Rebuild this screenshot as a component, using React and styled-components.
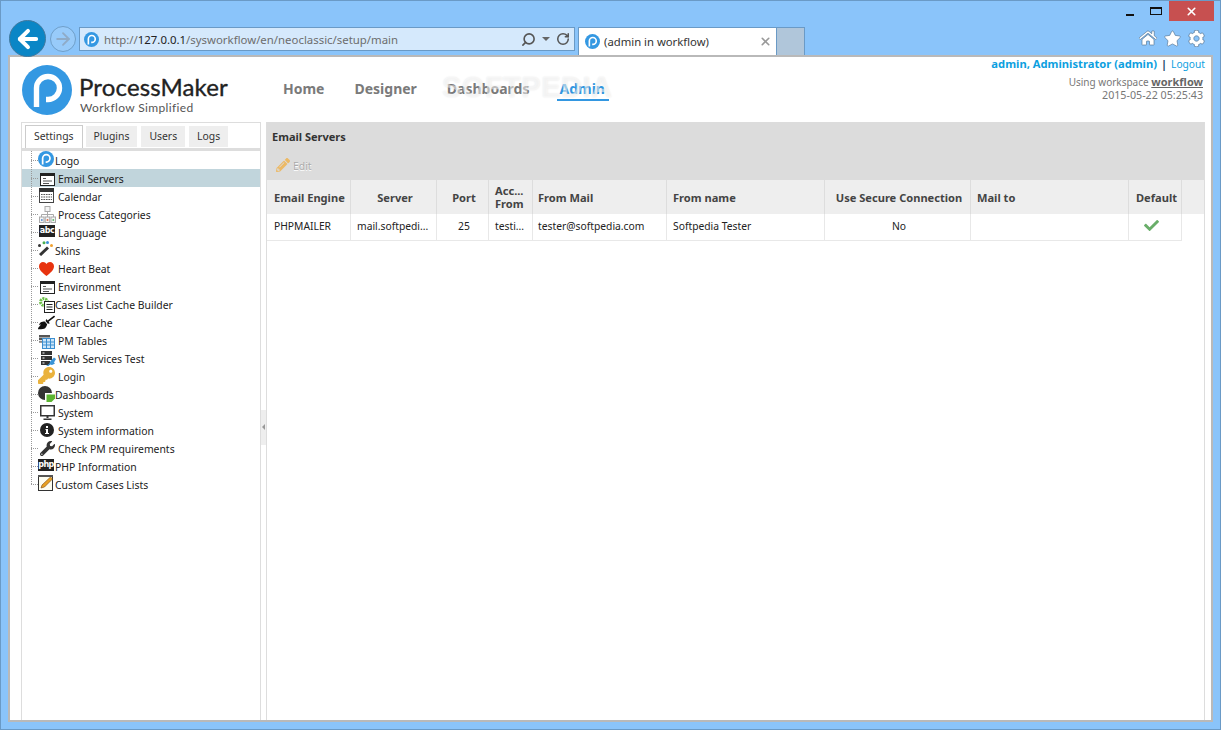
import React from "react";
import styled, { createGlobalStyle } from "styled-components";
import { Search, RotateCw, X, ArrowLeft, ArrowRight } from "lucide-react";
import { FaCog, FaHome, FaStar, FaBroom, FaKey, FaWrench, FaCheck, FaPencilAlt } from "react-icons/fa";

const UI_FONT = `"Noto Sans", "Open Sans", sans-serif`;
const COLUMNS = "84px 86px 52px 44px 134px 158px 146px 158px 53px";

const GlobalStyle = createGlobalStyle`
  html, body { margin: 0; padding: 0; background: #8ac4fa; }
  * { box-sizing: border-box; }
`;

function PMark({ size }) {
  return (
    <svg width={size} height={size} viewBox="0 0 50 50">
      <circle cx="25" cy="25" r="25" fill="#3498e2" />
      <path d="M14.500 42V23A11.500 11.500 0 1 1 26 34.500H24" fill="none" stroke="#fff" strokeWidth="5.400" />
    </svg>
  );
}

const FormIcon = () => (
  <svg width="15" height="13" viewBox="0 0 15 13">
    <rect x=".5" y=".5" width="14" height="12" fill="#fff" stroke="#222" />
    <rect x="1" y="1" width="13" height="2" fill="#222" />
    <path d="M3 5.500h3M3 8h9M3 10.500h6" stroke="#555" fill="none" />
  </svg>
);
const CalendarIcon = () => (
  <svg width="15" height="15" viewBox="0 0 15 15">
    <rect x=".5" y="1" width="14" height="13.500" fill="#fff" stroke="#444" />
    <rect x="0" y="0" width="15" height="4" fill="#333" />
    <path d="M2 6h11v1H2zM2 8.500h11v1H2zM2 11h11v1H2z" fill="#555" />
    <path d="M4 5.500v7M6.500 5.500v7M9 5.500v7M11.500 5.500v7" stroke="#fff" strokeWidth=".8" />
  </svg>
);
const CategoriesIcon = () => (
  <svg width="17" height="17" viewBox="0 0 17 17">
    <rect x="6" y=".5" width="5" height="5" fill="#f4f4f4" stroke="#aaa" />
    <path d="M8.500 5.500V8M2.500 11V8.500h12V11M8.500 8v3" fill="none" stroke="#aaa" />
    <rect x=".5" y="11" width="4.500" height="5.500" fill="#f4f4f4" stroke="#aaa" />
    <rect x="6.200" y="11" width="4.500" height="5.500" fill="#f4f4f4" stroke="#aaa" />
    <rect x="12" y="11" width="4.500" height="5.500" fill="#f4f4f4" stroke="#aaa" />
    <rect x="2" y="13" width="1.600" height="2" fill="#6d9ed8" />
    <rect x="7.700" y="13" width="1.600" height="2" fill="#e07a5a" />
    <rect x="13.500" y="13" width="1.600" height="2" fill="#6dbf7a" />
  </svg>
);
const SkinsIcon = () => (
  <svg width="15" height="15" viewBox="0 0 15 15">
    <path d="M2 14L10 6.500" stroke="#333" strokeWidth="3" />
    <circle cx="6" cy="1.800" r="1.500" fill="#4caf50" />
    <circle cx="9.500" cy="1.500" r="1.500" fill="#3a8fd8" />
    <circle cx="13.500" cy="4.500" r="1.500" fill="#f0a030" />
    <circle cx="1.500" cy="4.500" r="1.500" fill="#333" />
  </svg>
);
const HeartIcon = () => (
  <svg width="15" height="14" viewBox="0 0 15 14">
    <path d="M7.500 14C3 10.500 0 8 0 4.300 0 1.700 2 0 4 0c1.500 0 2.800.8 3.500 2C8.200.8 9.500 0 11 0c2 0 4 1.700 4 4.300C15 8 12 10.500 7.500 14z" fill="#e8330f" />
  </svg>
);
const CacheIcon = () => (
  <svg width="17" height="16" viewBox="0 0 17 16">
    <circle cx="5" cy="5" r="3.400" fill="none" stroke="#6cc04a" strokeWidth="3" strokeDasharray="2 .8" />
    <rect x="5.500" y="4.500" width="10" height="11" fill="#fff" stroke="#222" />
    <path d="M7.500 7.500h6M7.500 10h6M7.500 12.500h6" stroke="#222" />
  </svg>
);
const TablesIcon = () => (
  <svg width="16" height="14" viewBox="0 0 16 14">
    <rect x="3.500" y="3.500" width="12" height="10" fill="#cfe6f8" stroke="#3c8fd0" />
    <path d="M3.500 7h12M3.500 10h12M7.500 3.500v10M11.500 3.500v10" stroke="#3c8fd0" />
    <rect x="0" y="0" width="11" height="2.500" fill="#555" />
    <rect x="0" y="3" width="3" height="2" fill="#555" />
    <rect x="0" y="5.800" width="3" height="2" fill="#888" />
  </svg>
);
const ServicesIcon = () => (
  <svg width="15" height="15" viewBox="0 0 15 15">
    <rect x="0" y="0" width="11" height="4" fill="#333" />
    <rect x="0" y="5" width="11" height="4" fill="#333" />
    <rect x="0" y="10" width="9" height="4" fill="#333" />
    <path d="M1.500 2h2M1.500 7h2M1.500 12h2" stroke="#fff" />
    <path d="M5 15l3-2 1.500-3L13 6.500l2 1.500-2 3.500 1 1-3 1.500-2-.5-2 2z" fill="#3a94d6" />
  </svg>
);
const DashIcon = () => (
  <svg width="18" height="17" viewBox="0 0 18 17">
    <circle cx="7" cy="7" r="7" fill="#333" />
    <path d="M7 7h11v6l-4 4H7z" fill="#fff" />
    <path d="M8.500 8.500H17v4l-3.500 3.500h-5z" fill="#5cb531" />
  </svg>
);
const MonitorIcon = () => (
  <svg width="15" height="15" viewBox="0 0 15 15">
    <rect x=".75" y=".75" width="13.500" height="10" fill="#fff" stroke="#333" strokeWidth="1.500" />
    <path d="M6.500 11h2v2h-2zM3.500 13.500h8V15h-8z" fill="#333" />
  </svg>
);
const InfoIcon = () => (
  <svg width="14" height="14" viewBox="0 0 14 14">
    <circle cx="7" cy="7" r="7" fill="#222" />
    <path d="M6 3h2v2H6zM5.500 6H8v4h1v1H5v-1h1V7h-.5z" fill="#fff" />
  </svg>
);
const NoteIcon = () => (
  <svg width="16" height="16" viewBox="0 0 16 16">
    <rect x=".5" y="1.500" width="14" height="14" fill="#fdfdf0" stroke="#333" />
    <rect x="0" y="0" width="15" height="2" fill="#555" />
    <path d="M3 13l1-3L12.500 2l2 2-8 8z" fill="#e8a020" stroke="#7a4a10" strokeWidth=".6" />
  </svg>
);

const TREE_ITEMS = [
  { label: "Logo", icon: <PMark size={16} />, tight: true, left: 0, top: 0 },
  { label: "Email Servers", icon: <FormIcon />, selected: true, left: 2, top: 4 },
  { label: "Calendar", icon: <CalendarIcon />, left: 1, top: 1 },
  { label: "Process Categories", icon: <CategoriesIcon />, left: 1, top: 1 },
  { label: "Language", badge: "abc", left: 1, top: 2 },
  { label: "Skins", icon: <SkinsIcon />, tight: true, left: 0, top: 0 },
  { label: "Heart Beat", icon: <HeartIcon />, left: 1, top: 3 },
  { label: "Environment", icon: <FormIcon />, left: 2, top: 4 },
  { label: "Cases List Cache Builder", icon: <CacheIcon />, tight: true, left: 1, top: 2 },
  { label: "Clear Cache", icon: <FaBroom size={17} color="#111" />, tight: true, left: 0, top: 1 },
  { label: "PM Tables", icon: <TablesIcon />, left: 1, top: 4 },
  { label: "Web Services Test", icon: <ServicesIcon />, left: 3, top: 2 },
  { label: "Login", icon: <FaKey size={17} color="#eab23c" />, left: 0, top: 0 },
  { label: "Dashboards", icon: <DashIcon />, tight: true, left: 0, top: 1 },
  { label: "System", icon: <MonitorIcon />, left: 2, top: 2 },
  { label: "System information", icon: <InfoIcon />, left: 2, top: 2 },
  { label: "Check PM requirements", icon: <FaWrench size={15} color="#333" />, left: 2, top: 2 },
  { label: "PHP Information", badge: "php", tight: true, left: 0, top: 2 },
  { label: "Custom Cases Lists", icon: <NoteIcon />, tight: true, left: 0, top: 0, last: true },
];

export default function App() {
  return (
    <>
      <GlobalStyle />
      <Window>
        <TitleBar>
          <WinButton><MinGlyph /></WinButton>
          <WinButton><MaxGlyph /></WinButton>
          <CloseButton><X size={13} strokeWidth={3} color="#fff" /></CloseButton>
        </TitleBar>
        <NavRow>
          <BackButton><ArrowLeft size={28} strokeWidth={3.4} color="#fff" /></BackButton>
          <ForwardButton><ArrowRight size={20} strokeWidth={2.2} color="#8fabc7" /></ForwardButton>
          <AddressBar>
            <PMark size={15} />
            <Url>http://<b>127.0.0.1</b>/sysworkflow/en/neoclassic/setup/main</Url>
            <FlippedSearch><Search size={15} strokeWidth={2.6} color="#555" /></FlippedSearch>
            <DropCaret />
            <RotateCw size={14} strokeWidth={2.6} color="#555" />
          </AddressBar>
          <BrowserTab>
            <PMark size={15} />
            <TabTitle>(admin in workflow)</TabTitle>
            <X size={13} strokeWidth={3} color="#999" />
          </BrowserTab>
          <NewTab />
          <ToolIcons>
            <FaHome size={18} color="#fff" stroke="#4a6a88" strokeWidth={20} />
            <FaStar size={17} color="#fff" stroke="#4a6a88" strokeWidth={20} />
            <FaCog size={17} color="#fff" stroke="#4a6a88" strokeWidth={20} />
          </ToolIcons>
        </NavRow>
        <Page>
          <Header>
            <LogoBlock>
              <PMark size={50} />
              <LogoText>
                <Brand>ProcessMaker</Brand>
                <Tagline>Workflow Simplified</Tagline>
              </LogoText>
            </LogoBlock>
            <MainNav>
              <NavLink>Home</NavLink>
              <NavLink>Designer</NavLink>
              <NavLink>Dashboards</NavLink>
              <NavLink $active>Admin</NavLink>
            </MainNav>
            <Watermark>SOFTPEDIA</Watermark>
            <UserInfo>
              <UserLine>
                <UserName>admin, Administrator (admin)</UserName>
                <Pipe>|</Pipe>
                <Logout>Logout</Logout>
              </UserLine>
              <WorkspaceLine>Using workspace <b>workflow</b></WorkspaceLine>
              <DateLine>2015-05-22 05:25:43</DateLine>
            </UserInfo>
          </Header>
          <Body>
            <SidePanel>
              <TabStrip>
                <SideTab $active>Settings</SideTab>
                <SideTab>Plugins</SideTab>
                <SideTab $gap>Users</SideTab>
                <SideTab $gap>Logs</SideTab>
              </TabStrip>
              <Tree>
                {TREE_ITEMS.map((item) => (
                  <TreeRow key={item.label} $selected={item.selected}>
                    <Elbow $last={item.last} />
                    <TreeIcon $tight={item.tight} $left={item.left} $top={item.top}>
                      {item.badge ? <Badge>{item.badge}</Badge> : item.icon}
                    </TreeIcon>
                    <TreeLabel>{item.label}</TreeLabel>
                  </TreeRow>
                ))}
              </Tree>
            </SidePanel>
            <Splitter>
              <SplitHandle><SplitArrow /></SplitHandle>
            </Splitter>
            <MainPanel>
              <PanelTop>
                <PanelTitle>Email Servers</PanelTitle>
                <EditButton>
                  <FaPencilAlt size={14} color="#ecb965" />
                  <EditLabel>Edit</EditLabel>
                </EditButton>
              </PanelTop>
              <HeadRow>
                <HeadCell $pad={7}>Email Engine</HeadCell>
                <HeadCell $center>Server</HeadCell>
                <HeadCell $center>Port</HeadCell>
                <HeadCell>Acc...<br />From</HeadCell>
                <HeadCell $pad={5}>From Mail</HeadCell>
                <HeadCell>From name</HeadCell>
                <HeadCell $center>Use Secure Connection</HeadCell>
                <HeadCell>Mail to</HeadCell>
                <HeadCell $center>Default</HeadCell>
              </HeadRow>
              <DataRow>
                <DataCell $pad={7}>PHPMAILER</DataCell>
                <DataCell>mail.softpedi...</DataCell>
                <DataCell $center>25</DataCell>
                <DataCell>testi...</DataCell>
                <DataCell $pad={5}>tester@softpedia.com</DataCell>
                <DataCell>Softpedia Tester</DataCell>
                <DataCell $center>No</DataCell>
                <DataCell />
                <CheckCell><FaCheck size={15} color="#69ae69" /></CheckCell>
              </DataRow>
            </MainPanel>
          </Body>
        </Page>
      </Window>
    </>
  );
}

const Window = styled.div`
  width: 1221px;
  height: 730px;
  display: flex;
  flex-direction: column;
  background: #8ac4fa;
  border: 1px solid #6a9ac6;
  font-family: ${UI_FONT};
  overflow: hidden;
`;
const TitleBar = styled.div`
  height: 20px;
  flex: none;
  display: flex;
  justify-content: flex-end;
  padding-right: 6px;
`;
const WinButton = styled.div`
  width: 26px;
  display: flex;
  align-items: center;
  justify-content: center;
`;
const MinGlyph = styled.div`
  width: 8px;
  height: 2px;
  margin-top: 7px;
  background: #111;
`;
const MaxGlyph = styled.div`
  width: 12px;
  height: 8px;
  border: 1px solid #111;
  border-top-width: 2px;
`;
const CloseButton = styled(WinButton)`
  width: 45px;
  background: #c75050;
`;
const NavRow = styled.div`
  height: 34px;
  flex: none;
  display: flex;
  align-items: flex-start;
  padding-left: 8px;
  position: relative;
  z-index: 2;
`;
const BackButton = styled.div`
  width: 37px;
  height: 37px;
  margin-top: -1px;
  border-radius: 50%;
  background: #0a86c6;
  border: 1px solid #41799e;
  display: flex;
  align-items: center;
  justify-content: center;
`;
const ForwardButton = styled.div`
  width: 26px;
  height: 26px;
  margin: 5px 3px 0 4px;
  border-radius: 50%;
  border: 1px solid #6f9fc9;
  background: rgba(255, 255, 255, 0.12);
  display: flex;
  align-items: center;
  justify-content: center;
`;
const AddressBar = styled.div`
  width: 496px;
  height: 24px;
  margin-top: 6px;
  padding: 0 4px;
  display: flex;
  align-items: center;
  gap: 4px;
  background: #d5e9fc;
  border: 1px solid #6a9ac6;
`;
const Url = styled.div`
  flex: 1;
  padding-left: 1px;
  font-size: 11.4px;
  color: #6d6d6d;
  b { font-weight: 400; color: #222; }
`;
const FlippedSearch = styled.div`
  display: flex;
  transform: scaleX(-1);
`;
const DropCaret = styled.div`
  border: 4px solid transparent;
  border-bottom: none;
  border-top: 4px solid #666;
  margin: 0 2px;
`;
const BrowserTab = styled.div`
  width: 199px;
  height: 28px;
  margin: 6px 0 0 3px;
  padding: 0 4px 0 6px;
  display: flex;
  align-items: center;
  gap: 4px;
  background: #fff;
  border: 1px solid #6a9ac6;
  border-bottom: none;
`;
const TabTitle = styled.div`
  flex: 1;
  font-size: 11.3px;
  color: #333;
`;
const NewTab = styled.div`
  width: 28px;
  height: 28px;
  margin-top: 6px;
  background: #b0c6da;
  border: 1px solid #6a9ac6;
  border-width: 1px 1px 0 0;
`;
const ToolIcons = styled.div`
  margin-left: auto;
  height: 20px;
  margin-top: 7px;
  margin-right: 15px;
  display: flex;
  align-items: center;
  gap: 7px;
`;
const Page = styled.div`
  flex: 1;
  min-height: 0;
  margin: 0 7px 7px;
  display: flex;
  flex-direction: column;
  background: #fff;
  border: 2px solid #b9b9b9;
`;
const Header = styled.div`
  height: 65px;
  flex: none;
  display: flex;
  align-items: flex-start;
  padding: 0 6px 0 12px;
  position: relative;
`;
const LogoBlock = styled.div`
  width: 259px;
  height: 65px;
  padding-top: 8px;
  display: flex;
  gap: 7px;
`;
const LogoText = styled.div`
  display: flex;
  flex-direction: column;
  padding-top: 8px;
`;
const Brand = styled.div`
  font-family: Lato, sans-serif;
  font-size: 24px;
  line-height: 28px;
  letter-spacing: 0.15px;
  -webkit-text-stroke: 0.35px #222;
  color: #222;
`;
const Tagline = styled.div`
  padding-left: 1px;
  font-family: Lato, sans-serif;
  font-size: 12px;
  line-height: 13px;
  letter-spacing: 0.35px;
  color: #555;
`;
const MainNav = styled.div`
  display: flex;
  gap: 26px;
  padding-top: 22px;
`;
const NavLink = styled.div`
  padding: 0 ${(p) => (p.$active ? 4 : 2)}px 1px 2px;
  font-size: 14px;
  line-height: 19px;
  font-weight: 700;
  color: ${(p) => (p.$active ? "#3397e1" : "#7a7a7a")};
  border-bottom: 2px solid ${(p) => (p.$active ? "#3397e1" : "transparent")};
`;
const Watermark = styled.div`
  position: absolute;
  left: 432px;
  top: 14px;
  font-family: "Liberation Sans", sans-serif;
  font-size: 29px;
  font-weight: 700;
  letter-spacing: 0.5px;
  color: rgba(255, 255, 255, 0.55);
  text-shadow: 0 0 2px rgba(0, 0, 0, 0.1);
  pointer-events: none;
`;
const UserInfo = styled.div`
  margin-left: auto;
  text-align: right;
  font-size: 10px;
  color: #777;
`;
const UserLine = styled.div`
  line-height: 14px;
  margin-bottom: 4px;
`;
const UserName = styled.span`
  font-size: 11.2px;
  font-weight: 700;
  color: #0d9fdf;
`;
const Pipe = styled.span`
  margin: 0 4px;
  font-size: 11px;
  font-weight: 700;
  color: #246;
`;
const Logout = styled.span`
  font-size: 10.2px;
  color: #0d9fdf;
`;
const WorkspaceLine = styled.div`
  padding-right: 2px;
  line-height: 13px;
  b { font-size: 11px; color: #666; text-decoration: underline; }
`;
const DateLine = styled(WorkspaceLine)`
  font-size: 10.7px;
`;
const Body = styled.div`
  flex: 1;
  min-height: 0;
  display: flex;
  padding: 0 6px 0 11px;
`;
const SidePanel = styled.div`
  width: 240px;
  flex: none;
  border: 1px solid #ddd;
  border-width: 1px 1px 0;
`;
const TabStrip = styled.div`
  height: 28px;
  padding: 2px 0 0 3px;
  display: flex;
  align-items: flex-start;
  gap: 3px;
  border-bottom: 3px solid #ddd;
`;
const SideTab = styled.div`
  height: ${(p) => (p.$active ? 23 : 21)}px;
  margin-top: ${(p) => (p.$active ? 0 : 1)}px;
  margin-left: ${(p) => (p.$gap ? 1 : 0)}px;
  padding: 0 8px 2px;
  display: flex;
  align-items: center;
  font-size: 10.4px;
  color: #333;
  background: ${(p) => (p.$active ? "#fff" : "#eee")};
  border: ${(p) => (p.$active ? "1px solid #ccc" : "none")};
  border-bottom: none;
`;
const Tree = styled.div`
  font-size: 10.4px;
  color: #222;
`;
const TreeRow = styled.div`
  height: 18px;
  display: flex;
  align-items: center;
  padding-left: 9px;
  background: ${(p) => (p.$selected ? "#c1d5dc" : "transparent")};
  white-space: nowrap;
`;
const TreeLabel = styled.span`
  padding-top: 2px;
`;
const Elbow = styled.div`
  width: 7px;
  flex: none;
  align-self: stretch;
  background:
    repeating-linear-gradient(to right, #999 0 1px, transparent 1px 2px) left center / 100% 1px no-repeat,
    repeating-linear-gradient(to bottom, #999 0 1px, transparent 1px 2px) left top / 1px ${(p) => (p.$last ? "50%" : "100%")} no-repeat;
`;
const TreeIcon = styled.div`
  width: ${(p) => (p.$tight ? 17 : 20)}px;
  height: 18px;
  flex: none;
  display: flex;
  align-items: flex-start;
  padding: ${(p) => p.$top}px 0 0 ${(p) => p.$left}px;
  svg { flex: none; }
`;
const Badge = styled.span`
  width: 16px;
  height: 12px;
  display: flex;
  align-items: center;
  justify-content: center;
  font-family: "DejaVu Sans", sans-serif;
  font-size: 8px;
  font-weight: 700;
  letter-spacing: -0.5px;
  line-height: 12px;
  color: #fff;
  background: #222;
`;
const Splitter = styled.div`
  width: 5px;
  flex: none;
  display: flex;
  align-items: center;
`;
const SplitHandle = styled.div`
  width: 5px;
  height: 35px;
  margin-top: 12px;
  display: flex;
  align-items: center;
  justify-content: center;
  background: #eee;
`;
const SplitArrow = styled.div`
  border: 3px solid transparent;
  border-left: none;
  border-right: 3px solid #999;
`;
const MainPanel = styled.div`
  flex: 1;
  min-width: 0;
  border: 1px solid #ddd;
  border-width: 0 1px;
`;
const PanelTop = styled.div`
  height: 58px;
  padding: 7px 0 0 5px;
  background: #dcdcdc;
`;
const PanelTitle = styled.div`
  font-size: 11px;
  line-height: 15px;
  font-weight: 700;
  color: #333;
`;
const EditButton = styled.div`
  margin-top: 13px;
  padding-left: 4px;
  display: flex;
  align-items: center;
  gap: 3px;
  font-size: 10.4px;
  color: #aaa;
  text-shadow: 0 1px 0 #fff;
`;
const EditLabel = styled.span`
  padding-top: 2px;
`;
const HeadRow = styled.div`
  display: grid;
  grid-template-columns: ${COLUMNS};
  height: 34px;
  background: #eee;
`;
const HeadCell = styled.div`
  display: flex;
  align-items: center;
  justify-content: ${(p) => (p.$center ? "center" : "flex-start")};
  padding: 0 6px 0 ${(p) => (p.$center ? 9 : p.$pad ?? 6)}px;
  font-size: 11.1px;
  line-height: 13px;
  font-weight: 700;
  color: #444;
  border-right: 1px solid #ddd;
  white-space: nowrap;
`;
const DataRow = styled.div`
  display: grid;
  grid-template-columns: ${COLUMNS};
  width: 915px;
  height: 27px;
  border-bottom: 1px solid #e8e8e8;
`;
const DataCell = styled.div`
  display: flex;
  align-items: center;
  justify-content: ${(p) => (p.$center ? "center" : "flex-start")};
  padding: 0 6px 3px ${(p) => (p.$center ? 9 : p.$pad ?? 6)}px;
  font-size: 10.3px;
  color: #222;
  border-right: 1px solid #e8e8e8;
  white-space: nowrap;
`;
const CheckCell = styled(DataCell)`
  justify-content: center;
  padding: 0 7px 3px 0;
`;
